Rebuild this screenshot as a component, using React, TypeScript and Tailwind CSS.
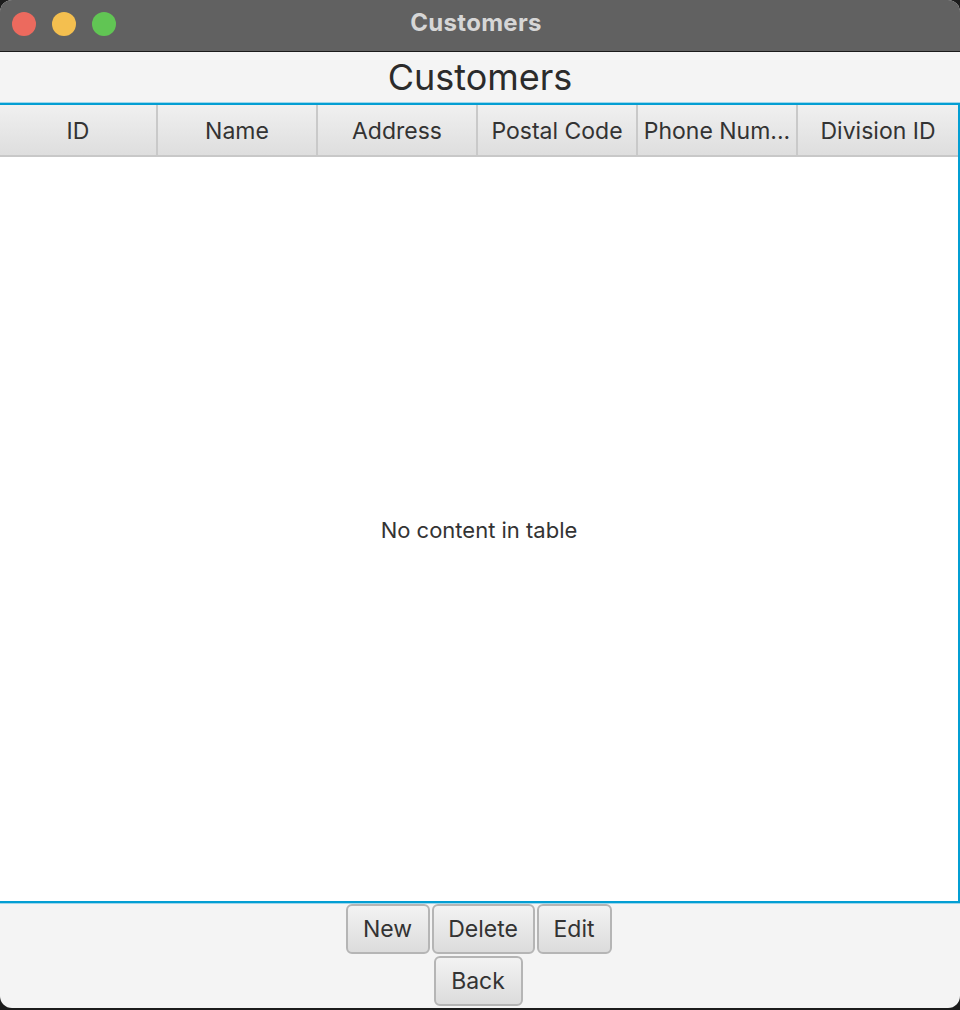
import React from 'react';

const columns = ['ID', 'Name', 'Address', 'Postal Code', 'Phone Num...', 'Division ID'];

const Light: React.FC<{ color: string }> = ({ color }) => (
  <span className={`block w-[24px] h-[24px] rounded-full ${color}`} />
);

const FxButton: React.FC<{ label: string; className?: string }> = ({ label, className = '' }) => (
  <button
    className={`h-[50px] rounded-[6px] border-2 border-[#b5b5b5] bg-gradient-to-b from-[#f3f3f3] to-[#dcdcdc] text-[23px] text-[#333] ${className}`}
  >
    {label}
  </button>
);

export default function App() {
  return (
    <div className="w-[960px] h-[1010px] bg-[#1c1c1c] font-['Inter','Noto_Sans',sans-serif]">
      <div className="w-[960px] h-[1008px] rounded-[12px] overflow-hidden flex flex-col bg-[#f4f4f4]">
        {/* title bar */}
        <div className="relative h-[52px] bg-[#616161] border-b border-[#1a1a1a] flex items-center shrink-0">
          <div className="flex gap-[16px] pl-[12px] mb-[4px]">
            <Light color="bg-[#ec6a5e]" />
            <Light color="bg-[#f4bf4f]" />
            <Light color="bg-[#61c554]" />
          </div>
          <div className="absolute inset-0 flex items-center justify-center">
            <span className="text-[24px] font-bold text-[#d6d6d6] mr-[8px] mb-[6px] tracking-[0.3px]">Customers</span>
          </div>
        </div>

        {/* heading */}
        <div className="h-[51px] flex items-center justify-center shrink-0">
          <h1 className="text-[36px] text-[#2b2b2b] leading-none mb-[2px]">Customers</h1>
        </div>

        {/* table */}
        <div className="h-[800px] shrink-0 border-y-2 border-r-2 border-[#039ed3] bg-white flex flex-col shadow-[0_0_0_1px_#9fd6ea]">
          <div className="flex h-[52px] shrink-0 border-b-2 border-[#c8c8c8]">
            {columns.map((c) => (
              <div
                key={c}
                className="w-[160px] pt-[3px] flex items-center justify-center border-r-2 border-[#c9c9c9] bg-gradient-to-b from-[#f0f0f0] to-[#dedede] text-[23px] text-[#333] first:w-[158px] last:border-r-0"
              >
                {c}
              </div>
            ))}
          </div>
          <div className="flex-1 flex items-center justify-center">
            <span className="text-[22px] text-[#333] mt-[2px]">No content in table</span>
          </div>
        </div>

        {/* buttons */}
        <div className="flex flex-col items-center gap-[2px] pt-[1px]">
          <div className="flex gap-[2px] mr-[3px]">
            <FxButton label="New" className="w-[84px]" />
            <FxButton label="Delete" className="w-[103px]" />
            <FxButton label="Edit" className="w-[75px]" />
          </div>
          <FxButton label="Back" className="w-[89px] ml-[-4px]" />
        </div>
      </div>
    </div>
  );
}
